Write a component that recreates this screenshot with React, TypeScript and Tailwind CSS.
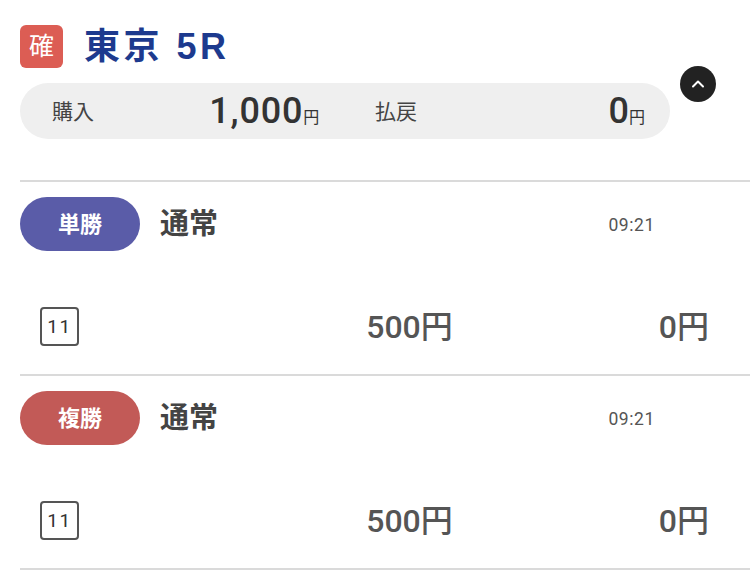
const BETS = [
  { type: "単勝", color: "bg-[#5a5ca8]", kind: "通常", time: "09:21", horse: "11", amount: "500円", payout: "0円" },
  { type: "複勝", color: "bg-[#c25a57]", kind: "通常", time: "09:21", horse: "11", amount: "500円", payout: "0円" },
];

const FONT = "font-['Liberation_Sans','Noto_Sans_CJK_JP',sans-serif]";
const NUM = "font-['Roboto','Noto_Sans_CJK_JP',sans-serif]";

export default function App() {
  return (
    <div className={`min-h-[574px] w-[750px] bg-white pl-5 ${FONT}`}>
      {/* Race header */}
      <header className="relative pt-[25px] pr-20 pb-[41px]">
        <div className="flex items-center gap-[21px]">
          <span className="flex h-[43px] w-[43px] items-center justify-center rounded-[6px] bg-[#dc5d54] text-[25px] leading-none text-white">
            確
          </span>
          <h1 className="text-[36px] font-bold leading-none tracking-[3.5px] text-[#1d3a8e]">
            東京 5R
          </h1>
        </div>
        <div className="mt-[15px] flex h-[56px] w-[650px] items-center rounded-full bg-[#efefef] pl-8 pr-[25px] text-[#333]">
          <div className="flex w-[268px] items-center justify-between">
            <span className="text-[21px] leading-none text-[#444]">購入</span>
            <span className={`${NUM} flex items-baseline text-[36px] font-medium leading-none tracking-[0.8px]`}>
              1,000<span className="text-[16px] font-normal">円</span>
            </span>
          </div>
          <div className="ml-[55px] flex flex-1 items-center justify-between">
            <span className="text-[21px] leading-none text-[#444]">払戻</span>
            <span className={`${NUM} flex items-baseline text-[36px] font-medium leading-none`}>
              0<span className="text-[16px] font-normal">円</span>
            </span>
          </div>
        </div>
        <button className="absolute left-[660px] top-[66px] flex h-9 w-9 items-center justify-center rounded-full bg-[#222]">
          <svg width="16" height="16" viewBox="0 0 16 16" fill="none">
            <path d="M3 10.5 8 5.5l5 5" stroke="white" strokeWidth="2" strokeLinecap="round" strokeLinejoin="round" />
          </svg>
        </button>
      </header>

      <ul className="border-t-2 border-[#dadada]">
        {BETS.map((b, i) => (
          <li key={i} className="border-b-2 border-[#dadada] pt-[15px] pb-[28px]">
            <div className="flex h-[54px] items-center">
              <span className={`flex h-[54px] w-[120px] items-center justify-center rounded-full text-[22px] font-bold text-white ${b.color}`}>
                {b.type}
              </span>
              <span className="ml-5 text-[29px] font-bold leading-none text-[#444]">{b.kind}</span>
              <span className={`${NUM} ml-auto mr-[95px] pt-1 text-[17.5px] leading-none tracking-[0.6px] text-[#555]`}>
                {b.time}
              </span>
            </div>
            <div className="mt-[56px] flex h-[39px] items-center pl-5 pr-[41px]">
              <span className={`${NUM} flex h-[39px] w-[39px] items-center justify-center rounded-[4px] border-2 border-[#555] text-[19px] leading-none tracking-[1.5px] text-[#333]`}>
                {b.horse}
              </span>
              <span className={`${NUM} ml-auto text-[32px] font-medium leading-none text-[#555]`}>{b.amount}</span>
              <span className={`${NUM} ml-[206px] text-[32px] font-medium leading-none text-[#555]`}>{b.payout}</span>
            </div>
          </li>
        ))}
      </ul>
    </div>
  );
}
